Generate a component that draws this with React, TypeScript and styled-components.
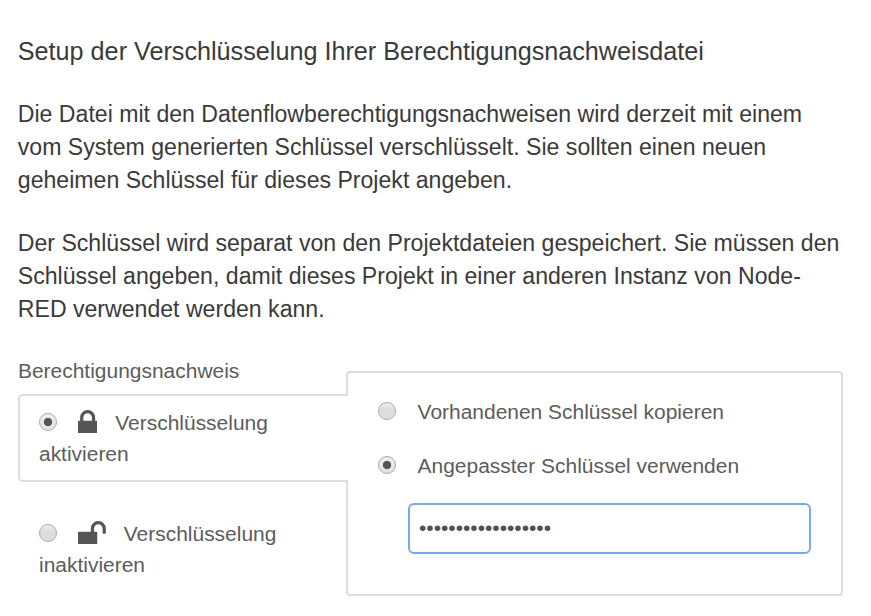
import React, { useState } from 'react';
import styled, { createGlobalStyle } from 'styled-components';

const GlobalStyle = createGlobalStyle`
  * { box-sizing: border-box; }
  body {
    margin: 0;
    background: #fff;
    color: #3a3a3a;
    font-family: "Liberation Sans", Arial, sans-serif;
  }
`;

const Page = styled.main`
  width: 871px;
  height: 616px;
  padding: 34px 28px 0 17.8px;
  overflow: hidden;
`;

const Heading = styled.h1`
  margin: 0 0 30px;
  font-size: 25.2px;
  font-weight: 400;
  line-height: 34px;
`;

const Paragraph = styled.p`
  width: 830px;
  margin: 0 0 30px;
  font-size: 23.1px;
  line-height: 33px;
`;

const Settings = styled.section`
  display: flex;
  align-items: flex-start;
  margin-top: 29px;
  padding-left: 0.2px;
  color: #5c5c5c;
  font-size: 20.96px;
`;

const Tabs = styled.div`
  width: 330px;
  flex: none;
  z-index: 1;
`;

const TabsLabel = styled.div`
  margin: 0 0 8px;
  line-height: 30px;
`;

const Tab = styled.label<{ $active: boolean }>`
  display: block;
  height: ${(p) => (p.$active ? 88 : 111)}px;
  padding: 11px 19px;
  border: 2px solid ${(p) => (p.$active ? '#ddd' : 'transparent')};
  border-right: 0;
  border-radius: 5px 0 0 5px;
  background: ${(p) => (p.$active ? '#fff' : 'transparent')};
  line-height: 31px;

  & + & {
    margin-top: 23px;
  }
`;

const Panel = styled.div`
  position: relative;
  width: 497px;
  height: 225px;
  margin: 15px 0 0 -2px;
  padding: 24px 30px 0;
  border: 2px solid #ddd;
  border-radius: 4px;

  &::before {
    content: '';
    position: absolute;
    top: 132px;
    left: -2px;
    width: 1px;
    height: 1px;
    background: #fff;
  }
`;

const Choice = styled.label`
  display: flex;
  align-items: flex-start;
  height: 30px;
  margin-bottom: 24px;
  line-height: 30px;
`;

const Radio = styled.input.attrs({ type: 'radio' })<{ $gap: number; $top?: number }>`
  appearance: none;
  display: inline-block;
  flex: none;
  width: 18px;
  height: 18px;
  margin: ${(p) => p.$top ?? 0}px ${(p) => p.$gap}px 0 0;
  border: 1px solid #aaa;
  border-radius: 50%;
  background: linear-gradient(#eee, #ddd 45%, #dedede);
  vertical-align: -1px;

  &:checked {
    background:
      radial-gradient(circle, #555 0 3.8px, transparent 4.5px),
      linear-gradient(#eee, #e2e2e2);
  }
`;

const LockSvg = styled.svg`
  display: inline-block;
  height: 23.4px;
  margin-right: 18px;
  fill: #555;
  vertical-align: -3px;
`;

const KeyField = styled.input`
  display: block;
  width: 403px;
  height: 51px;
  margin: -2px 0 0 30px;
  padding: 0 9px 1px;
  border: 2px solid #78aaeb;
  border-radius: 6px;
  outline: none;
  background: #fff;
  color: #505050;
  font: 20.96px "Liberation Sans", Arial, sans-serif;
`;

const LockIcon = () => (
  <LockSvg viewBox="0 128 1152 1408" width="19.3" preserveAspectRatio="none">
    <path d="M320 768h512v-192q0-106-75-181t-181-75-181 75-75 181v192zM1152 840v624q0 30-21 51t-51 21h-1008q-30 0-51-21t-21-51v-624q0-30 21-51t51-21h56v-192q0-184 132-316t316-132 316 132 132 316v192h56q30 0 51 21t21 51z" />
  </LockSvg>
);

const UnlockIcon = () => (
  <LockSvg viewBox="0 128 1664 1408" width="27.8" preserveAspectRatio="none">
    <path d="M1664 576v256q0 26-19 45t-45 19h-64q-26 0-45-19t-19-45v-256q0-106-75-181t-181-75-181 75-75 181v192h120q30 0 51 21t21 51v624q0 30-21 51t-51 21h-1008q-30 0-51-21t-21-51v-624q0-30 21-51t51-21h696v-192q0-185 131.500-316.500t316.500-131.500 316.500 131.500 131.500 316.500z" />
  </LockSvg>
);

export default function App() {
  const [encrypt, setEncrypt] = useState(true);
  const [source, setSource] = useState('custom');
  const [secret, setSecret] = useState('projektschluessel1');

  return (
    <>
      <GlobalStyle />
      <Page>
        <Heading>Setup der Verschlüsselung Ihrer Berechtigungsnachweisdatei</Heading>
        <Paragraph>
          Die Datei mit den Datenflowberechtigungsnachweisen wird derzeit mit einem
          <br />
          vom System generierten Schlüssel verschlüsselt. Sie sollten einen neuen
          <br />
          geheimen Schlüssel für dieses Projekt angeben.
        </Paragraph>
        <Paragraph>
          Der Schlüssel wird separat von den Projektdateien gespeichert. Sie müssen den
          <br />
          Schlüssel angeben, damit dieses Projekt in einer anderen Instanz von Node-
          <br />
          RED verwendet werden kann.
        </Paragraph>
        <Settings>
          <Tabs>
            <TabsLabel>Berechtigungsnachweis</TabsLabel>
            <Tab $active={encrypt}>
              <Radio $gap={21} name="mode" checked={encrypt} onChange={() => setEncrypt(true)} />
              <LockIcon />
              Verschlüsselung
              <br />
              aktivieren
            </Tab>
            <Tab $active={!encrypt}>
              <Radio $gap={21} name="mode" checked={!encrypt} onChange={() => setEncrypt(false)} />
              <UnlockIcon />
              Verschlüsselung
              <br />
              inaktivieren
            </Tab>
          </Tabs>
          <Panel>
            <Choice>
              <Radio $gap={21.6} $top={5} name="source" checked={source === 'copy'} onChange={() => setSource('copy')} />
              Vorhandenen Schlüssel kopieren
            </Choice>
            <Choice>
              <Radio $gap={21.6} $top={5} name="source" checked={source === 'custom'} onChange={() => setSource('custom')} />
              Angepasster Schlüssel verwenden
            </Choice>
            <KeyField type="password" value={secret} onChange={(e) => setSecret(e.target.value)} />
          </Panel>
        </Settings>
      </Page>
    </>
  );
}
